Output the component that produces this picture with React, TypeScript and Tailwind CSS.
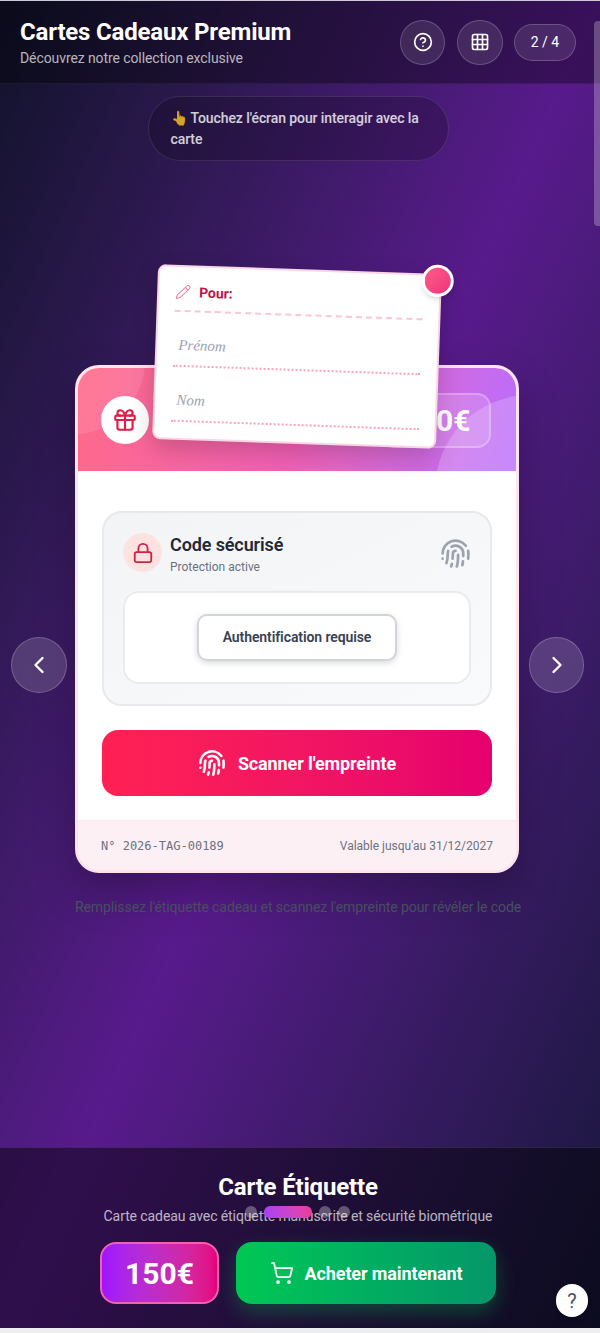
import { ChevronLeft, ChevronRight, CircleHelp, Fingerprint, Gift, Grid3x3, Lock, Pencil, ShoppingCart } from 'lucide-react';

function Label() {
  return (
    <div className="absolute left-[80px] top-[-96px] z-10 w-[284px] h-[175px] rotate-2 rounded-[8px] border-2 border-[#fbd5e5] bg-white px-[16px] shadow-[0_10px_24px_rgba(0,0,0,0.18)]">
      <div className="flex items-center gap-[8px] h-[45px] pt-[7px] border-b-2 border-dashed border-[#f9c6d6]">
        <Pencil size={16} strokeWidth={1.5} className="text-[#f27a9b]" />
        <span className="text-[14px] font-bold tracking-[-0.0065em] text-[#be1248]">Pour:</span>
      </div>
      <div className="flex items-center h-[55px] pt-[14px] pl-[5px] border-b-2 border-dotted border-[#f7a3bd]">
        <span className="font-['Liberation_Serif',serif] italic text-[15px] text-[#9ca3af]">Prénom</span>
      </div>
      <div className="flex items-center h-[55px] pt-[14px] pl-[5px] border-b-2 border-dotted border-[#f7a3bd]">
        <span className="font-['Liberation_Serif',serif] italic text-[15px] text-[#9ca3af]">Nom</span>
      </div>
      <div className="absolute right-[-14px] top-[-11px] w-[32px] h-[32px] rounded-full border-[3px] border-white bg-linear-to-br from-[#ff5c8a] to-[#f0307a] shadow-md" />
    </div>
  );
}

function Card() {
  return (
    <div className="relative mt-[204px] w-[444px]">
      <Label />
      <div className="overflow-hidden rounded-[24px] border-[3px] border-[#fde3ee] bg-white shadow-[0_20px_40px_rgba(0,0,0,0.25)]">
        <div className="relative flex h-[103px] items-center justify-between overflow-hidden bg-linear-105 from-[#ff6a88] via-[#f360b5] via-50% to-[#b86cff] pl-[23px] pr-[25px] pt-[1px]">
          <div className="absolute left-[-83px] top-[-83px] w-[150px] h-[150px] rounded-full bg-white/10" />
          <div className="absolute left-[357px] top-[27px] w-[190px] h-[190px] rounded-full bg-white/20" />
          <div className="relative flex w-[48px] h-[48px] items-center justify-center rounded-full bg-white">
            <Gift size={26} strokeWidth={2} className="text-[#e11d48]" />
          </div>
          <div className="relative flex w-[110px] h-[55px] items-center justify-center rounded-[14px] border-2 border-white/25 bg-white/15 text-[30px] font-bold text-white">150€</div>
        </div>
        <div className="px-[24px] pt-[40px] pb-[24px]">
          <div className="rounded-[20px] border-2 border-[#e8e9ec] bg-linear-to-br from-[#f3f4f6] to-[#f9fafb] px-[19px] pt-[20px] pb-[20px]">
            <div className="flex items-start justify-between">
              <div className="flex items-start gap-[8px]">
                <div className="flex w-[39px] h-[39px] items-center justify-center rounded-full bg-[#fee2e2]">
                  <Lock size={22} strokeWidth={2} className="text-[#d81f42]" />
                </div>
                <div className="flex flex-col">
                  <span className="text-[18px] leading-[24px] font-semibold tracking-[-0.0065em] text-[#1f2937]">Code sécurisé</span>
                  <span className="text-[12px] leading-[18px] pt-px text-[#6b7280]">Protection active</span>
                </div>
              </div>
              <Fingerprint size={31} strokeWidth={2.1} className="mt-[5px] text-[#9ca3af]" />
            </div>
            <div className="mt-[15px] flex h-[93px] items-center justify-center rounded-[16px] border-2 border-[#eaebee] bg-white">
              <div className="flex w-[200px] h-[47px] items-center justify-center rounded-[10px] border-2 border-[#d1d5db] bg-white text-[14px] font-semibold tracking-[-0.0065em] text-[#374151] shadow-[0_2px_6px_rgba(0,0,0,0.15)]">
                Authentification requise
              </div>
            </div>
          </div>
          <button className="mt-[24px] flex w-full h-[66px] items-center justify-center gap-[12px] rounded-[16px] bg-linear-to-r from-[#ff2153] to-[#e6006e] text-[18px] font-bold tracking-[-0.0065em] text-white">
            <Fingerprint size={28} strokeWidth={2.2} />
            Scanner l'empreinte
          </button>
        </div>
        <div className="flex h-[50px] items-center justify-between border-t border-[#fce7ef] bg-[#fdf0f4] px-[23px] pt-[1px] text-[12px] text-[#6b7280]">
          <span className="font-['DejaVu_Sans_Mono',monospace]">N° 2026-TAG-00189</span>
          <span>Valable jusqu'au 31/12/2027</span>
        </div>
      </div>
    </div>
  );
}

export default function App() {
  return (
    <div className="relative flex h-[1333px] w-[600px] flex-col overflow-hidden border-t border-[#cfc8d8] bg-linear-to-br from-[#10122a] via-[#581a8c] to-[#16163a] font-['Roboto',sans-serif]">
      <header className="flex h-[83px] shrink-0 items-center justify-between bg-black/35 border-b border-white/5 pl-[20px] pr-[24px]">
        <div className="flex flex-col">
          <h1 className="text-[24px] leading-[32px] font-bold tracking-[-0.0075em] text-white">Cartes Cadeaux Premium</h1>
          <p className="text-[14px] leading-[20px] tracking-[-0.0065em] text-white/70">Découvrez notre collection exclusive</p>
        </div>
        <div className="flex items-center gap-[11px]">
          <div className="mr-px flex w-[45px] h-[45px] items-center justify-center rounded-full border border-white/20 bg-white/10 text-white">
            <CircleHelp size={20} />
          </div>
          <div className="flex w-[46px] h-[45px] items-center justify-center rounded-full border border-white/20 bg-white/10 text-white">
            <Grid3x3 size={20} />
          </div>
          <div className="flex w-[62px] h-[37px] items-center justify-center rounded-full border border-white/20 bg-white/10 text-[14px] text-white">2 / 4</div>
        </div>
      </header>

      <main className="relative flex flex-1 flex-col items-center pt-[12px] pr-[6px]">
        <div className="ml-[2px] w-[301px] h-[65px] rounded-[32px] border border-white/10 bg-black/20 px-[22px] pt-[11px] text-[14px] leading-[21px] font-medium tracking-[-0.0065em] text-white/80">
          👆 Touchez l'écran pour interagir avec la carte
        </div>
        <Card />
        <p className="mt-[24px] ml-[2px] text-[14px] leading-[20px] tracking-[-0.0065em] text-[#4b5563]">Remplissez l'étiquette cadeau et scannez l'empreinte pour révéler le code</p>
      </main>

      <button className="absolute left-[11px] top-[636px] flex w-[56px] h-[56px] items-center justify-center rounded-full border border-white/20 bg-white/15 text-white">
        <ChevronLeft size={28} />
      </button>
      <button className="absolute left-[529px] top-[636px] flex w-[55px] h-[56px] items-center justify-center rounded-full border border-white/20 bg-white/15 text-white">
        <ChevronRight size={28} />
      </button>

      <footer className="relative flex h-[181px] shrink-0 flex-col items-center border-t border-white/10 bg-black/45 pt-[23px] pr-[4px]">
        <h2 className="text-[24px] leading-[32px] font-bold tracking-[-0.0075em] text-white">Carte Étiquette</h2>
        <p className="mt-[3px] text-[14px] leading-[20px] tracking-[-0.0065em] text-white/70">Carte cadeau avec étiquette manuscrite et sécurité biométrique</p>
        <div className="mt-[16px] flex gap-[17px]">
          <div className="flex w-[119px] h-[62px] items-center justify-center rounded-[16px] border-2 border-[#f062b0] bg-linear-to-r from-[#a012ff] to-[#e6007e] text-[30px] font-bold text-white">150€</div>
          <button className="flex w-[260px] h-[62px] items-center justify-center gap-[11px] rounded-[16px] bg-linear-to-r from-[#00c853] to-[#059669] text-[18px] font-bold tracking-[-0.0065em] text-white shadow-[0_8px_20px_rgba(0,200,83,0.3)]">
            <ShoppingCart size={24} strokeWidth={1.75} />
            Acheter maintenant
          </button>
        </div>
        <div className="absolute left-[245px] top-[58px] flex items-center gap-[7px]">
          <span className="w-[12px] h-[12px] rounded-full bg-white/30" />
          <span className="w-[48px] h-[12px] rounded-full bg-linear-to-r from-[#a63ff5] to-[#ee3a9a]" />
          <span className="w-[12px] h-[12px] rounded-full bg-white/30" />
          <span className="w-[12px] h-[12px] rounded-full bg-white/30" />
        </div>
      </footer>
      <div className="h-[5px] shrink-0 bg-[#eeeef0]" />

      <div className="absolute right-0 top-[20px] w-[6px] h-[205px] rounded-l-[4px] bg-white/25" />
      <div className="absolute left-[556px] top-[1283px] flex w-[32px] h-[33px] items-center justify-center rounded-full bg-white text-[20px] text-[#4b5563] shadow-md">?</div>
    </div>
  );
}
